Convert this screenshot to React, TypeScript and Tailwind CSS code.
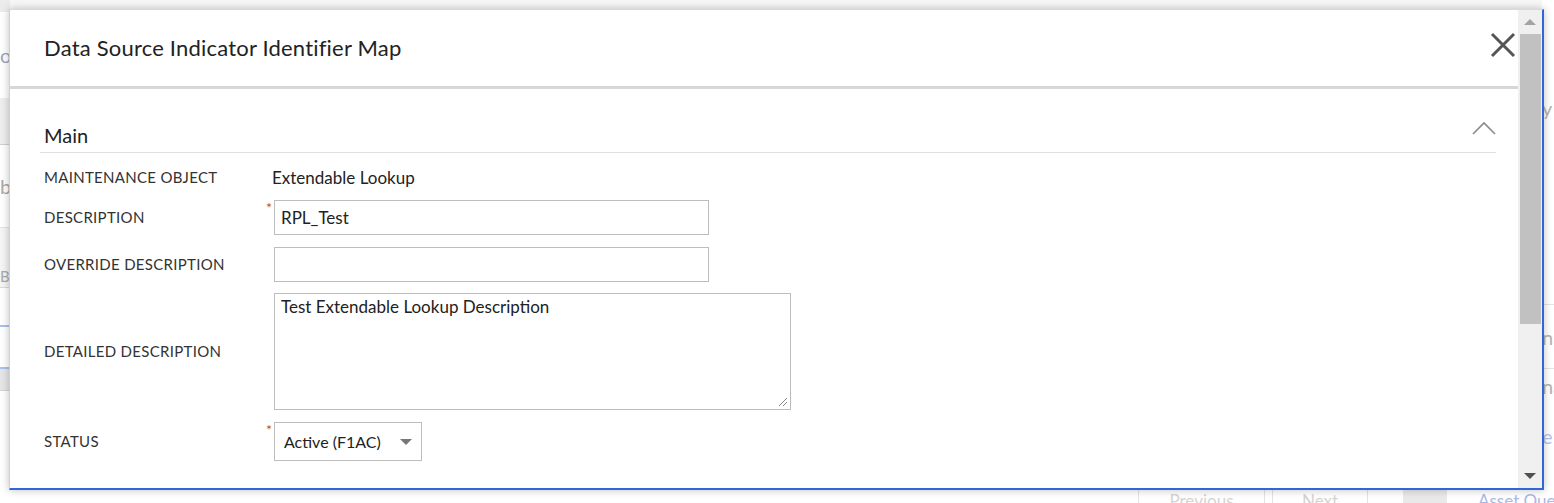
import React from 'react';

const labelCls = 'text-[15px] text-[#333] tracking-[0.3px] uppercase';

const Row = ({ label, h, children, req }: { label: string; h: string; children: React.ReactNode; req?: boolean }) => (
  <div className={`flex items-center ${h}`}>
    <div className={`w-[222px] ${labelCls}`}>{label}</div>
    <div className="flex h-full items-center">
      <span className="w-[8px] h-full relative">
        {req && <span className="absolute left-0 top-[1px] text-[14px] leading-none text-[#b5512c]">*</span>}
      </span>
      {children}
    </div>
  </div>
);

const Scrollbar = () => (
  <div className="w-[24px] h-full bg-[#f0f0f0] flex flex-col items-center">
    <div className="h-[24px] w-full flex items-center justify-center">
      <span className="w-0 h-0 border-l-[6px] border-r-[6px] border-b-[6px] border-l-transparent border-r-transparent border-b-[#a3a3a3]" />
    </div>
    <div className="w-[21px] h-[290px] bg-[#c1c1c1]" />
    <div className="flex-1" />
    <div className="h-[24px] w-full flex items-center justify-center">
      <span className="w-0 h-0 border-l-[6px] border-r-[6px] border-t-[6px] border-l-transparent border-r-transparent border-t-[#505050]" />
    </div>
  </div>
);

const Dialog = () => (
  <div className="absolute left-[9px] top-[9px] w-[1535px] h-[481px] bg-white border-t border-l border-t-[#d9d9d9] border-l-[#d0d0d0] border-r-2 border-b-2 border-r-[#2f66d9] border-b-[#2f66d9] shadow-[0_0_8px_rgba(0,0,0,0.25)] flex">
    <div className="flex-1 flex flex-col min-w-0">
      <div className="h-[79px] flex items-center justify-between pl-[34px] pr-[2px] border-b-[3px] border-b-[#d7d7d7]">
        <h1 className="text-[22px] tracking-[0.2px] text-[#222] mb-[2px]">Data Source Indicator Identifier Map</h1>
        <svg width="26" height="26" viewBox="0 0 26 26" className="mb-[6px]">
          <path d="M2 2 L24 24 M24 2 L2 24" stroke="#555" strokeWidth="3" />
        </svg>
      </div>
      <div className="pl-[30px] pr-[22px]">
        <div className="h-[64px] flex items-end justify-between border-b border-b-[#e0e0e0] pl-[4px] pb-[2px]">
          <h2 className="text-[20px] text-[#222]">Main</h2>
          <svg width="24" height="14" viewBox="0 0 24 14" className="mb-[15px]">
            <path d="M1 13 L12 2 L23 13" stroke="#8a8a8a" strokeWidth="1.6" fill="none" />
          </svg>
        </div>
        <div className="pl-[4px] flex flex-col">
          <div className="flex items-center h-[47px] pt-[2px]">
            <div className={`w-[228px] ${labelCls}`}>Maintenance Object</div>
            <div className="text-[17px] text-[#222]">Extendable Lookup</div>
          </div>
          <Row label="Description" h="h-[35px]" req>
            <div className="w-[435px] h-[35px] border border-[#bdbdbd] flex items-center px-[6px] text-[17px] text-[#222]">RPL_Test</div>
          </Row>
          <div className="h-[12px]" />
          <Row label="Override Description" h="h-[35px]">
            <div className="w-[435px] h-[35px] border border-[#bdbdbd]" />
          </Row>
          <div className="h-[11px]" />
          <Row label="Detailed Description" h="h-[117px]">
            <div className="relative w-[517px] h-[117px] border border-[#bdbdbd] px-[6px] text-[17px] text-[#222]">
              Test Extendable Lookup Description
              <svg width="10" height="10" viewBox="0 0 10 10" className="absolute right-[2px] bottom-[2px]">
                <path d="M9 1 L1 9 M9 5 L5 9" stroke="#888" strokeWidth="1" />
              </svg>
            </div>
          </Row>
          <div className="h-[12px]" />
          <Row label="Status" h="h-[39px]" req>
            <div className="w-[148px] h-[39px] border border-[#bdbdbd] flex items-center justify-between pl-[9px] pr-[9px] text-[16px] text-[#222]">
              <span>Active (F1AC)</span>
              <span className="w-0 h-0 border-l-[6px] border-r-[6px] border-t-[6px] border-l-transparent border-r-transparent border-t-[#777]" />
            </div>
          </Row>
        </div>
      </div>
    </div>
    <Scrollbar />
  </div>
);

const Background = () => (
  <div className="w-full h-full flex flex-col bg-[#f7f7f7]">
    <div className="flex flex-1">
      <div className="w-[10px] flex flex-col text-[20px] text-[#9aa6c0] overflow-hidden">
        <div className="h-[12px] bg-[#ececec]" />
        <div className="h-[86px] bg-white flex items-center">o</div>
        <div className="h-[47px] bg-[#eeeeee] border-b border-b-[#cfcfcf]" />
        <div className="h-[82px] bg-white flex items-center text-[#aaa]">b</div>
        <div className="h-[60px] bg-[#f5f5f5] border-t border-t-[#e2e2e2] flex items-end text-[15px] text-[#aaa]">B</div>
        <div className="h-[40px] bg-white border-t border-t-[#dadada] border-b-2 border-b-[#a9c1ee]" />
        <div className="h-[42px] bg-white border-b-2 border-b-[#a9c1ee]" />
        <div className="h-[22px] bg-[#e6e6e6] border-b border-b-[#d5d5d5]" />
        <div className="flex-1 bg-white" />
      </div>
      <div className="flex-1" />
      <div className="w-[12px] flex flex-col text-[20px] text-[#b5b5b5] overflow-hidden bg-white">
        <div className="h-[90px]" />
        <div className="h-[36px] flex items-center">y</div>
        <div className="h-[179px] border-b border-b-[#e5e5e5]" />
        <div className="h-[64px] flex items-center border-b border-b-[#e5e5e5]">n</div>
        <div className="h-[34px] flex items-center">na</div>
        <div className="h-[48px] flex items-end text-[#b6c3ea]">e</div>
        <div className="flex-1" />
      </div>
    </div>
    <div className="h-[14px] flex bg-white text-[17px] leading-[24px] text-[#d4d4d4] overflow-hidden">
      <div className="w-[1138px] shrink-0" />
      <div className="w-[127px] shrink-0 border-l border-r border-[#e3e3e3] text-center">Previous</div>
      <div className="w-[7px] shrink-0" />
      <div className="w-[96px] shrink-0 border-l border-r border-[#e3e3e3] text-center">Next</div>
      <div className="w-[35px] shrink-0" />
      <div className="w-[44px] shrink-0 bg-[#e9e9e9]" />
      <div className="w-[31px] shrink-0" />
      <div className="text-[#aab8e6] whitespace-nowrap shrink-0">Asset Queue</div>
    </div>
  </div>
);

export default function App() {
  return (
    <div className="relative w-[1554px] h-[503px] overflow-hidden" style={{ fontFamily: 'Lato, "Open Sans", sans-serif' }}>
      <Background />
      <Dialog />
    </div>
  );
}
